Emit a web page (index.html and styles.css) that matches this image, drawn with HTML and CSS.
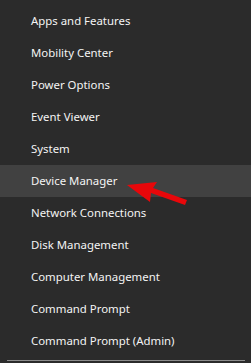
FILE: index.html
```html
<!DOCTYPE html>
<html lang="en">
<head>
    <meta charset="utf-8">
    <title>Quick Link Menu</title>
    <link rel="stylesheet" href="styles.css">
</head>
<body>

<nav class="menu">
    <ul class="menu-list">
        <li class="menu-item">Apps and Features</li>
        <li class="menu-item">Mobility Center</li>
        <li class="menu-item">Power Options</li>
        <li class="menu-item">Event Viewer</li>
        <li class="menu-item">System</li>
        <li class="menu-item active">
            Device Manager
            <!-- red pointer arrow -->
            <svg class="pointer" width="70" height="30" viewBox="0 0 70 30">
                <polygon points="2,15 32,12 28,18 62,30 60,35 26,23 25,32" fill="#e8070a"/>
            </svg>
        </li>
        <li class="menu-item">Network Connections</li>
        <li class="menu-item">Disk Management</li>
        <li class="menu-item">Computer Management</li>
        <li class="menu-item">Command Prompt</li>
        <li class="menu-item">Command Prompt (Admin)</li>
    </ul>
    <div class="separator"></div>
</nav>

</body>
</html>
```

FILE: styles.css
```css
body {
    margin: 0;
    padding: 0;
    background-color: #2b2b2b;
    font-family: "Noto Sans", "Open Sans", sans-serif;
}

.menu {
    padding-top: 5px;
}

.menu-list {
    list-style: none;
    margin: 0;
    padding: 0;
}

.menu-item {
    position: relative;
    height: 32px;
    line-height: 32px;
    padding-left: 31px;
    font-size: 11.4px;
    color: #f4f4f4;
}

.menu-item.active {
    background-color: #414141;
}

.pointer {
    position: absolute;
    left: 125px;
    top: 5px;
    overflow: visible;
}

.separator {
    margin: 3px 6px 0 7px;
    height: 1px;
    background-color: #8c8c8c;
}
```
